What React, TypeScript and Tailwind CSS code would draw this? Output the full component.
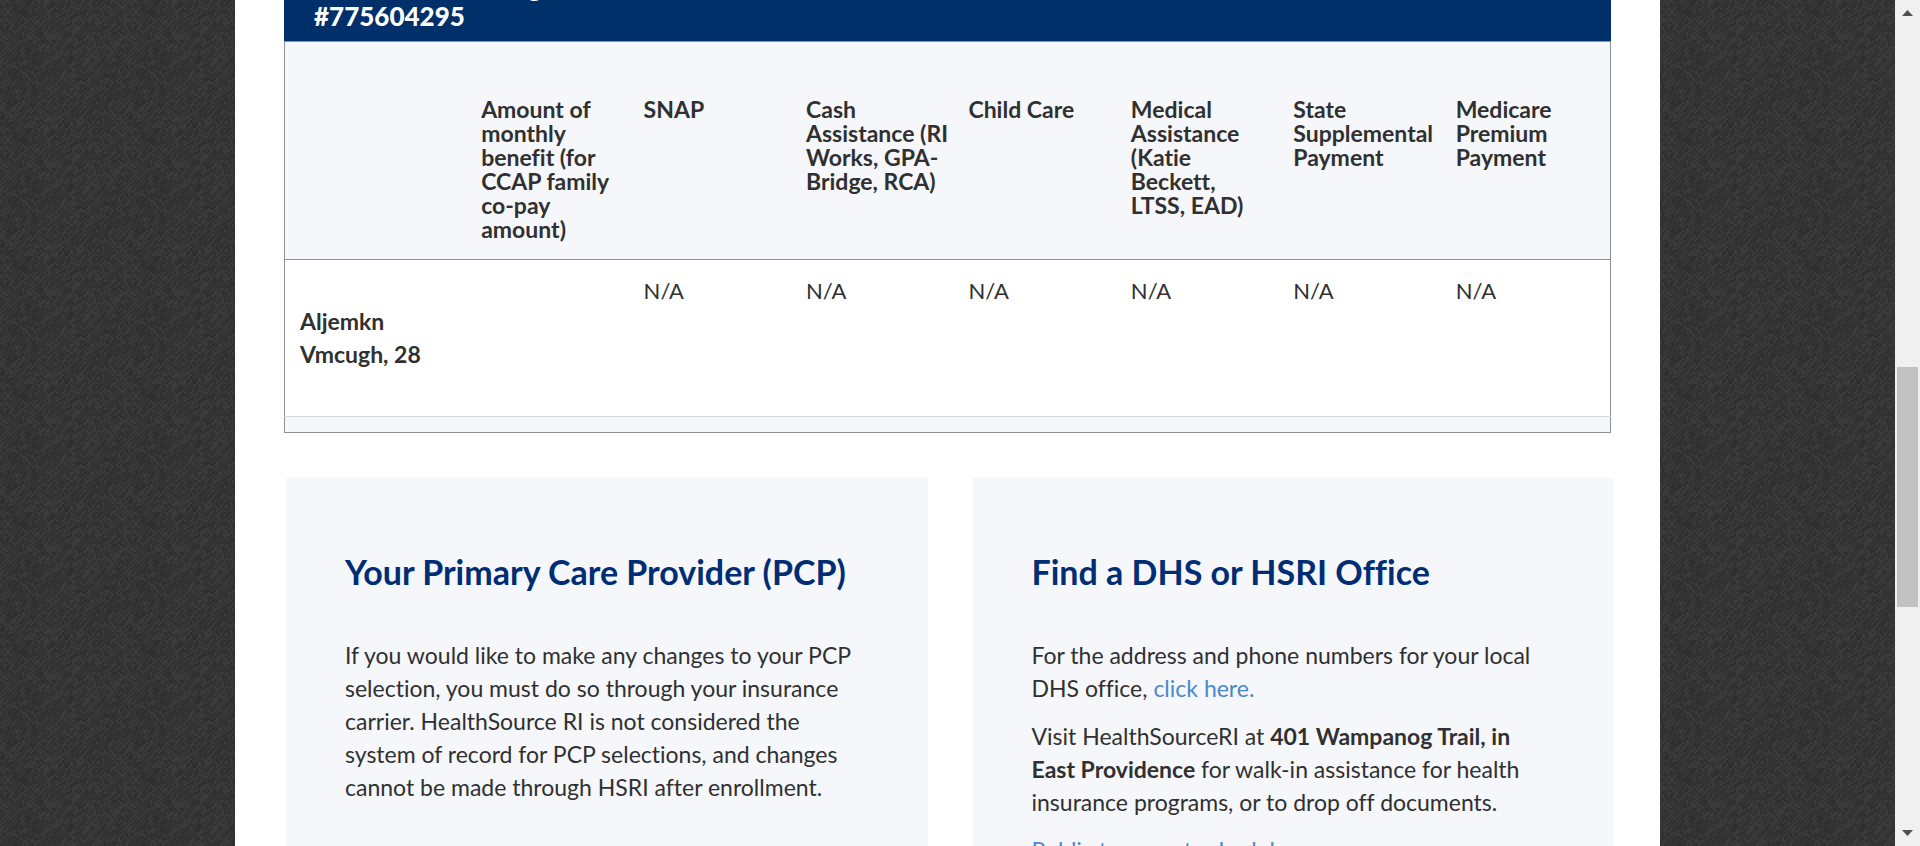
import React from "react";

const TILE = 128;

// Woven fabric tile: 2px specks that tend to run along the diagonals.
function weave(seed: number, density: number): string {
  let state = seed;
  const next = () => {
    state = (state * 16807) % 2147483647;
    return state / 2147483647;
  };
  let d = "";
  for (let i = 0; i < density; i++) {
    let x = Math.floor(next() * 64) * 2;
    let y = Math.floor(next() * 64) * 2;
    const run = 1 + Math.floor(next() * 3);
    const step = next() < 0.75 ? -2 : 2;
    for (let j = 0; j < run; j++) {
      d += `M${x} ${y}h2v2h-2z`;
      x = (x + 2) % TILE;
      y = (y + step + TILE) % TILE;
    }
  }
  return d;
}

function Fabric() {
  return (
    <svg aria-hidden="true" className="absolute inset-0 size-full">
      <defs>
        <pattern id="fabric" width={TILE} height={TILE} patternUnits="userSpaceOnUse">
          <rect width={TILE} height={TILE} fill="#343434" />
          <path d={weave(1717, 700)} fill="#2f2f2f" />
          <path d={weave(9143, 600)} fill="#3b3b3b" />
        </pattern>
      </defs>
      <rect width="100%" height="100%" fill="url(#fabric)" />
    </svg>
  );
}

const programs = [
  "SNAP",
  "Cash Assistance (RI Works, GPA-Bridge, RCA)",
  "Child Care",
  "Medical Assistance (Katie Beckett, LTSS, EAD)",
  "State Supplemental Payment",
  "Medicare Premium Payment",
];

function BenefitsTable() {
  const head = "pt-[55px] pr-1 pb-[18px] pl-[15px] align-top text-left leading-6 font-bold";
  return (
    <section className="mx-[49px]">
      <h2 className="flex h-[41px] flex-col justify-end overflow-hidden bg-[#00306a] px-[30px] pb-[10px] text-[26px] leading-[29px] font-black text-white">
        <span>Household Coverage for Case</span>
        <span>#775604295</span>
      </h2>
      <table className="w-full table-fixed border-collapse border border-[#8e9093] bg-[#f5f7fb]">
        <colgroup>
          <col className="w-[13.7%]" />
          <col className="w-[12.25%]" />
          <col className="w-[12.25%]" />
          <col className="w-[12.25%]" />
          <col className="w-[12.25%]" />
          <col className="w-[12.25%]" />
          <col className="w-[12.25%]" />
          <col />
        </colgroup>
        <thead>
          <tr className="border-b border-[#8e9093]">
            <td />
            <th scope="col" className={head}>
              Amount of monthly benefit (for CCAP family co-pay amount)
            </th>
            {programs.map((name) => (
              <th key={name} scope="col" className={head}>
                {name}
              </th>
            ))}
          </tr>
        </thead>
        <tbody>
          <tr className="border-b border-[#d3d5d8] bg-white">
            <th scope="row" className="pt-[45px] pr-6 pb-[45px] pl-[15px] text-left font-bold">
              Aljemkn Vmcugh, 28
            </th>
            <td />
            {programs.map((name) => (
              <td key={name} className="pt-[14px] pl-[15px] align-top text-[22px]">
                N/A
              </td>
            ))}
          </tr>
        </tbody>
        <tfoot>
          <tr>
            <td colSpan={8} className="h-4" />
          </tr>
        </tfoot>
      </table>
    </section>
  );
}

function Card({ title, children }: { title: string; children: React.ReactNode }) {
  return (
    <section className="min-h-[480px] flex-1 bg-[#f5f7fb] px-[59px] pt-[74px]">
      <h2 className="mb-[47px] text-[34px] leading-10 font-bold text-[#002d74]">{title}</h2>
      <div className="flex flex-col gap-[15px]">{children}</div>
    </section>
  );
}

function ScrollBar() {
  return (
    <div aria-hidden="true" className="flex w-[25px] shrink-0 flex-col items-center bg-[#f0f0f0] py-[10px]">
      <svg width="11" height="6" viewBox="0 0 11 6" fill="#505050">
        <path d="M0 6 5.5 0 11 6z" />
      </svg>
      <div className="grow-[350]" />
      <div className="h-60 w-[21px] bg-[#c1c1c1]" />
      <div className="grow-[222]" />
      <svg width="11" height="6" viewBox="0 0 11 6" fill="#505050">
        <path d="M0 0 5.5 6 11 0z" />
      </svg>
    </div>
  );
}

export default function App() {
  return (
    <div className="flex h-screen overflow-hidden font-['Lato',sans-serif] text-[23px] leading-[33px] text-[#303030] [font-variant-ligatures:none]">
      <div className="relative flex-1 overflow-hidden">
        <Fabric />
        <main className="relative mx-auto min-h-full max-w-[1425px] bg-white">
          <BenefitsTable />
          <div className="mt-[45px] flex gap-[45px] pr-[46px] pl-[51px]">
            <Card title="Your Primary Care Provider (PCP)">
              <p>
                If you would like to make any changes to your PCP selection, you must do so through your
                insurance carrier. HealthSource RI is not considered the system of record for PCP
                selections, and changes cannot be made through HSRI after enrollment.
              </p>
            </Card>
            <Card title="Find a DHS or HSRI Office">
              <p>
                For the address and phone numbers for your local DHS office,{" "}
                <a href="#offices" className="text-[#4a88cc]">
                  click here.
                </a>
              </p>
              <p>
                Visit HealthSourceRI at <strong className="font-bold">401 Wampanog Trail, in East Providence</strong>{" "}
                for walk-in assistance for health insurance programs, or to drop off documents.
              </p>
              <a href="#transport" className="text-[#4a88cc]">
                Public transport schedules
              </a>
            </Card>
          </div>
        </main>
      </div>
      <ScrollBar />
    </div>
  );
}
